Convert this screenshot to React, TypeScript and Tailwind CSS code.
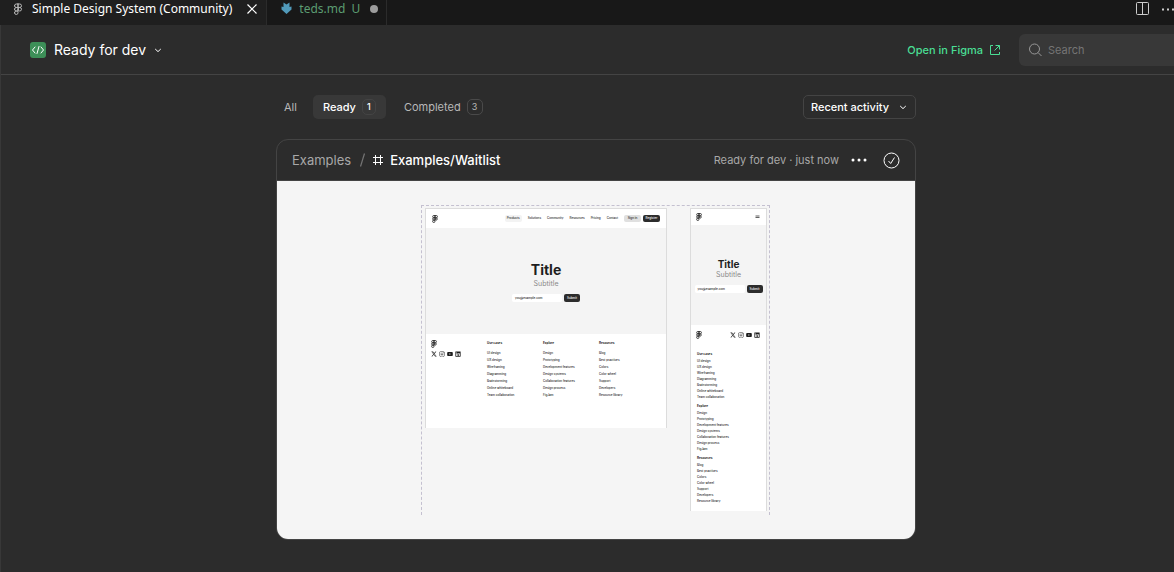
import React from "react";
import { FiFigma } from "react-icons/fi";
import { FaXTwitter, FaInstagram, FaYoutube, FaLinkedin } from "react-icons/fa6";

const footerLinks = [
  {
    title: "Use cases",
    links: ["UI design", "UX design", "Wireframing", "Diagramming", "Brainstorming", "Online whiteboard", "Team collaboration"],
  },
  {
    title: "Explore",
    links: ["Design", "Prototyping", "Development features", "Design systems", "Collaboration features", "Design process", "FigJam"],
  },
  {
    title: "Resources",
    links: ["Blog", "Best practices", "Colors", "Color wheel", "Support", "Developers", "Resource library"],
  },
];

const navItems = ["Products", "Solutions", "Community", "Resources", "Pricing", "Contact"];

function ChevronDown() {
  return (
    <svg width="8" height="8" viewBox="0 0 8 8" fill="none" stroke="currentColor" aria-hidden="true">
      <path d="M1.2 3 4 5.600 6.800 3" />
    </svg>
  );
}

function EditorTabs() {
  return (
    <div className="flex h-[25px] shrink-0 items-stretch bg-[#181818] font-['Noto_Sans',sans-serif] text-xs leading-[18px]">
      <div className="flex items-start border-r border-[#2b2b2b] bg-[#1f1f1f] pl-3 pr-2 text-white">
        <FiFigma className="mt-[3px] size-3 text-[#b5b5b5]" aria-hidden="true" />
        <span className="ml-2">Simple Design System (Community)</span>
        <button type="button" aria-label="Close tab" className="ml-3.5 mt-1">
          <svg width="12" height="10" viewBox="0 0 12 10" fill="none" stroke="currentColor" strokeWidth="1.2">
            <path d="m1.5.5 9 9m0-9-9 9" />
          </svg>
        </button>
      </div>
      <div className="flex items-start border-r border-[#2b2b2b] pl-3 pr-2 text-[#73c991]/75">
        <svg className="mt-0.5 ml-px" width="13" height="12" viewBox="0 0 13 12" fill="#519aba" aria-hidden="true">
          <path d="M3.500.5 6.500 2.500 9.500.5V5l2-.5v3L6.500 12 1.500 7.500v-3l2 .5z" />
        </svg>
        <span className="ml-1.5">teds.md</span>
        <span className="ml-1.5">U</span>
        <span className="ml-2.5 mt-[5px] size-2 rounded-full bg-[#9d9d9d]" />
      </div>
      <div className="ml-auto flex items-start gap-3 text-[#cccccc]">
        <button type="button" aria-label="Split editor" className="mt-0.5">
          <svg width="14" height="13" viewBox="0 0 14 13" fill="none" stroke="currentColor">
            <rect x=".5" y=".5" width="12" height="12" rx="1" />
            <path d="M6.500 .5v12" />
          </svg>
        </button>
        <button type="button" aria-label="More actions" className="mt-2">
          <svg width="12" height="3" viewBox="0 0 12 3" fill="currentColor">
            <rect y=".5" width="2" height="2" />
            <rect x="5" y=".5" width="2" height="2" />
            <rect x="10" y=".5" width="2" height="2" />
          </svg>
        </button>
      </div>
    </div>
  );
}

function Header() {
  return (
    <header className="flex h-[50px] shrink-0 items-center border-b border-[#444444] pl-[29px]">
      <span className="flex size-4 items-center justify-center rounded-[3px] bg-[#3d8f58] text-white">
        <svg width="14" height="10" viewBox="0 0 14 10" fill="none" stroke="currentColor" strokeLinecap="round" strokeLinejoin="round" aria-hidden="true">
          <path d="M4 2 1.500 5 4 8M10 2l2.500 3L10 8M8 1.500 6 8.500" />
        </svg>
      </span>
      <button type="button" className="ml-2 flex items-center gap-2 text-sm text-white">
        Ready for dev
        <ChevronDown />
      </button>
      <a href="#open" className="ml-auto flex items-center gap-1.5 text-[11px] font-medium leading-4 text-[#4ade94]">
        Open in Figma
        <svg width="12" height="12" viewBox="0 0 12 12" fill="none" stroke="currentColor" aria-hidden="true">
          <path d="M4 1.500H1.500v9h9V8M6.500 1.500h4v4M10.500 1.500l-5 5" />
        </svg>
      </a>
      <div className="ml-[18px] flex h-8 w-[155px] items-center gap-1.5 rounded-l-md bg-[#383838] pl-[9px]">
        <svg className="shrink-0" width="14" height="14" viewBox="0 0 14 14" fill="none" stroke="#979797" aria-hidden="true">
          <circle cx="6.500" cy="6" r="5" />
          <path d="m10 9.500 3.500 3.500" />
        </svg>
        <input
          type="search"
          aria-label="Search"
          placeholder="Search"
          className="h-4 w-full bg-transparent text-[11px] leading-4 text-white outline-none placeholder:text-[#757575]"
        />
      </div>
    </header>
  );
}

function FilterBar() {
  return (
    <div className="flex h-6 items-center text-[11px] text-[#b8b8b8]">
      <button type="button" className="h-6 px-2">All</button>
      <button type="button" className="ml-2 flex h-6 items-center gap-1.5 rounded-[5px] bg-[#383838] px-2.5 font-medium text-white">
        Ready
        <span className="flex h-4 min-w-3.5 items-center justify-center rounded-[5px] border border-[#444444] px-[3px] text-[9px]">1</span>
      </button>
      <button type="button" className="ml-2 flex h-6 items-center gap-1.5 px-2.5">
        Completed
        <span className="flex h-4 min-w-4 items-center justify-center rounded-[5px] border border-[#4a4a4a] px-[3px] text-[9px]">3</span>
      </button>
      <button type="button" className="ml-auto flex h-6 items-center gap-2.5 rounded-[5px] border border-[#444444] pl-[7px] pr-2 font-medium text-white">
        Recent activity
        <ChevronDown />
      </button>
    </div>
  );
}

function SocialIcons() {
  return (
    <div className="flex items-center gap-0.5 text-[#1e1e1e]">
      <FaXTwitter className="size-1.5" />
      <FaInstagram className="size-1.5" />
      <FaYoutube className="size-1.5" />
      <FaLinkedin className="size-1.5" />
    </div>
  );
}

function Logo() {
  return (
    <svg width="6" height="8" viewBox="0 0 6 8" fill="none" stroke="#1e1e1e" strokeWidth=".8">
      <path d="M3 .5H1.800a1.100 1.100 0 0 0 0 2.300H3zM3 .5h1.300a1.100 1.100 0 0 1 0 2.300H3zM3 2.800H1.800a1.100 1.100 0 0 0 0 2.300H3zM3 5.100H1.800A1.200 1.200 0 1 0 3 6.300z" />
      <circle cx="4.200" cy="4" r="1.100" />
    </svg>
  );
}

function EmailForm() {
  return (
    <div className="flex items-center gap-0.5 text-[3px] font-medium leading-[8px]">
      <span className="h-2 w-[50px] rounded-xs bg-white px-[3px] text-[#1e1e1e]">you@example.com</span>
      <span className="h-2 w-4 rounded-xs bg-[#2c2c2c] text-center text-white">Submit</span>
    </div>
  );
}

function DesktopFrame() {
  return (
    <div className="flex h-[220px] w-[242px] flex-col border border-b-0 border-[#dcdcdc] bg-white text-[#1e1e1e]">
      <div className="flex h-[19px] items-center px-1.5 text-[3px] font-medium leading-[7px]">
        <Logo />
        <div className="ml-auto flex items-center gap-1.5">
          {navItems.map((item, i) => (
            <span key={item} className={i === 0 ? "rounded-xs bg-[#f3f3f3] px-0.5" : ""}>{item}</span>
          ))}
        </div>
        <span className="ml-1.5 w-[17px] rounded-xs bg-[#e0e0e0] text-center">Sign in</span>
        <span className="ml-0.5 w-[17px] rounded-xs bg-[#2c2c2c] text-center text-white">Register</span>
      </div>
      <div className="flex h-[106px] flex-col items-center bg-[#f4f4f4] pt-[33px]">
        <div className="text-[14px] font-bold leading-[18px]">Title</div>
        <div className="mb-[5px] text-[7px] leading-[10px] text-[#8a8a8a]">Subtitle</div>
        <EmailForm />
      </div>
      <div className="flex px-[5px] pt-1.5 text-[3px] font-medium leading-[7px]">
        <div className="flex w-14 flex-col gap-[3px]">
          <Logo />
          <SocialIcons />
        </div>
        {footerLinks.map((group) => (
          <div key={group.title} className="w-14 whitespace-nowrap">
            <div className="mb-[3px] font-bold">{group.title}</div>
            {group.links.map((link) => (
              <div key={link}>{link}</div>
            ))}
          </div>
        ))}
      </div>
    </div>
  );
}

function MobileFrame() {
  return (
    <div className="flex h-[303px] w-[77px] flex-col border border-b-0 border-[#dcdcdc] bg-white text-[#1e1e1e]">
      <div className="flex h-4 items-center justify-between pl-[5px] pr-1.5">
        <Logo />
        <svg width="5" height="4" viewBox="0 0 5 4" stroke="currentColor" strokeWidth=".7">
          <path d="M.5 1h4M.5 2.500h4" />
        </svg>
      </div>
      <div className="flex h-[100px] flex-col items-center bg-[#f4f4f4] pt-[33px]">
        <div className="text-[10px] font-bold leading-[12px]">Title</div>
        <div className="mb-[5px] text-[7px] leading-[10px] text-[#8a8a8a]">Subtitle</div>
        <EmailForm />
      </div>
      <div className="flex items-center justify-between pl-[5px] pr-1.5 pt-1.5">
        <Logo />
        <SocialIcons />
      </div>
      <div className="flex flex-col gap-[3px] whitespace-nowrap px-1.5 pt-3 text-[3px] font-medium leading-[6px]">
        {footerLinks.map((group) => (
          <div key={group.title}>
            <div className="mb-px font-bold">{group.title}</div>
            {group.links.map((link) => (
              <div key={link}>{link}</div>
            ))}
          </div>
        ))}
      </div>
    </div>
  );
}

function DesignCard() {
  return (
    <article className="mt-5 overflow-hidden rounded-xl border border-[#444444]">
      <div className="flex h-[41px] items-center border-b border-[#444444] px-[15px] text-[13px] leading-[18px] text-[#a8a8a8]">
        <a href="#examples">Examples</a>
        <svg className="ml-2" width="7" height="14" viewBox="0 0 7 14" fill="none" stroke="#757575" aria-hidden="true">
          <path d="M5.500.5 1.500 13.500" strokeWidth="1.2" />
        </svg>
        <svg className="ml-1.5" width="12" height="12" viewBox="0 0 12 12" fill="none" stroke="white" aria-hidden="true">
          <path d="M3.500 1v10M8.500 1v10M1 3.500h10M1 8.500h10" />
        </svg>
        <h2 className="ml-1.5 font-medium text-white">Examples/Waitlist</h2>
        <span className="ml-auto text-[11px]">Ready for dev · just now</span>
        <button type="button" aria-label="More options" className="ml-3 text-white">
          <svg width="16" height="4" viewBox="0 0 16 4" fill="currentColor">
            <circle cx="2" cy="2" r="1.500" />
            <circle cx="8" cy="2" r="1.500" />
            <circle cx="14" cy="2" r="1.500" />
          </svg>
        </button>
        <button type="button" aria-label="Mark as completed" className="ml-4 text-white">
          <svg width="17" height="17" viewBox="0 0 17 17" fill="none" stroke="currentColor">
            <circle cx="8.500" cy="8.500" r="7.500" />
            <path d="m5.500 9 2.200 2.500L11.500 5.500" />
          </svg>
        </button>
      </div>
      <div className="flex justify-center bg-[#f5f5f5] py-6 pr-px">
        <div className="flex h-[310px] items-start gap-[23px] border border-b-0 border-dashed border-[#c4c0d0] pl-[3px] pr-0.5 pt-0.5">
          <DesktopFrame />
          <MobileFrame />
        </div>
      </div>
    </article>
  );
}

export default function App() {
  return (
    <div className="flex min-h-screen flex-col overflow-hidden bg-[#2c2c2c] font-['Inter',sans-serif]">
      <EditorTabs />
      <div className="flex grow flex-col border-l border-[#383838]">
        <Header />
        <main className="flex justify-center pb-8 pl-[17px] pt-5">
          <div className="w-full max-w-[640px]">
            <FilterBar />
            <DesignCard />
          </div>
        </main>
      </div>
    </div>
  );
}
